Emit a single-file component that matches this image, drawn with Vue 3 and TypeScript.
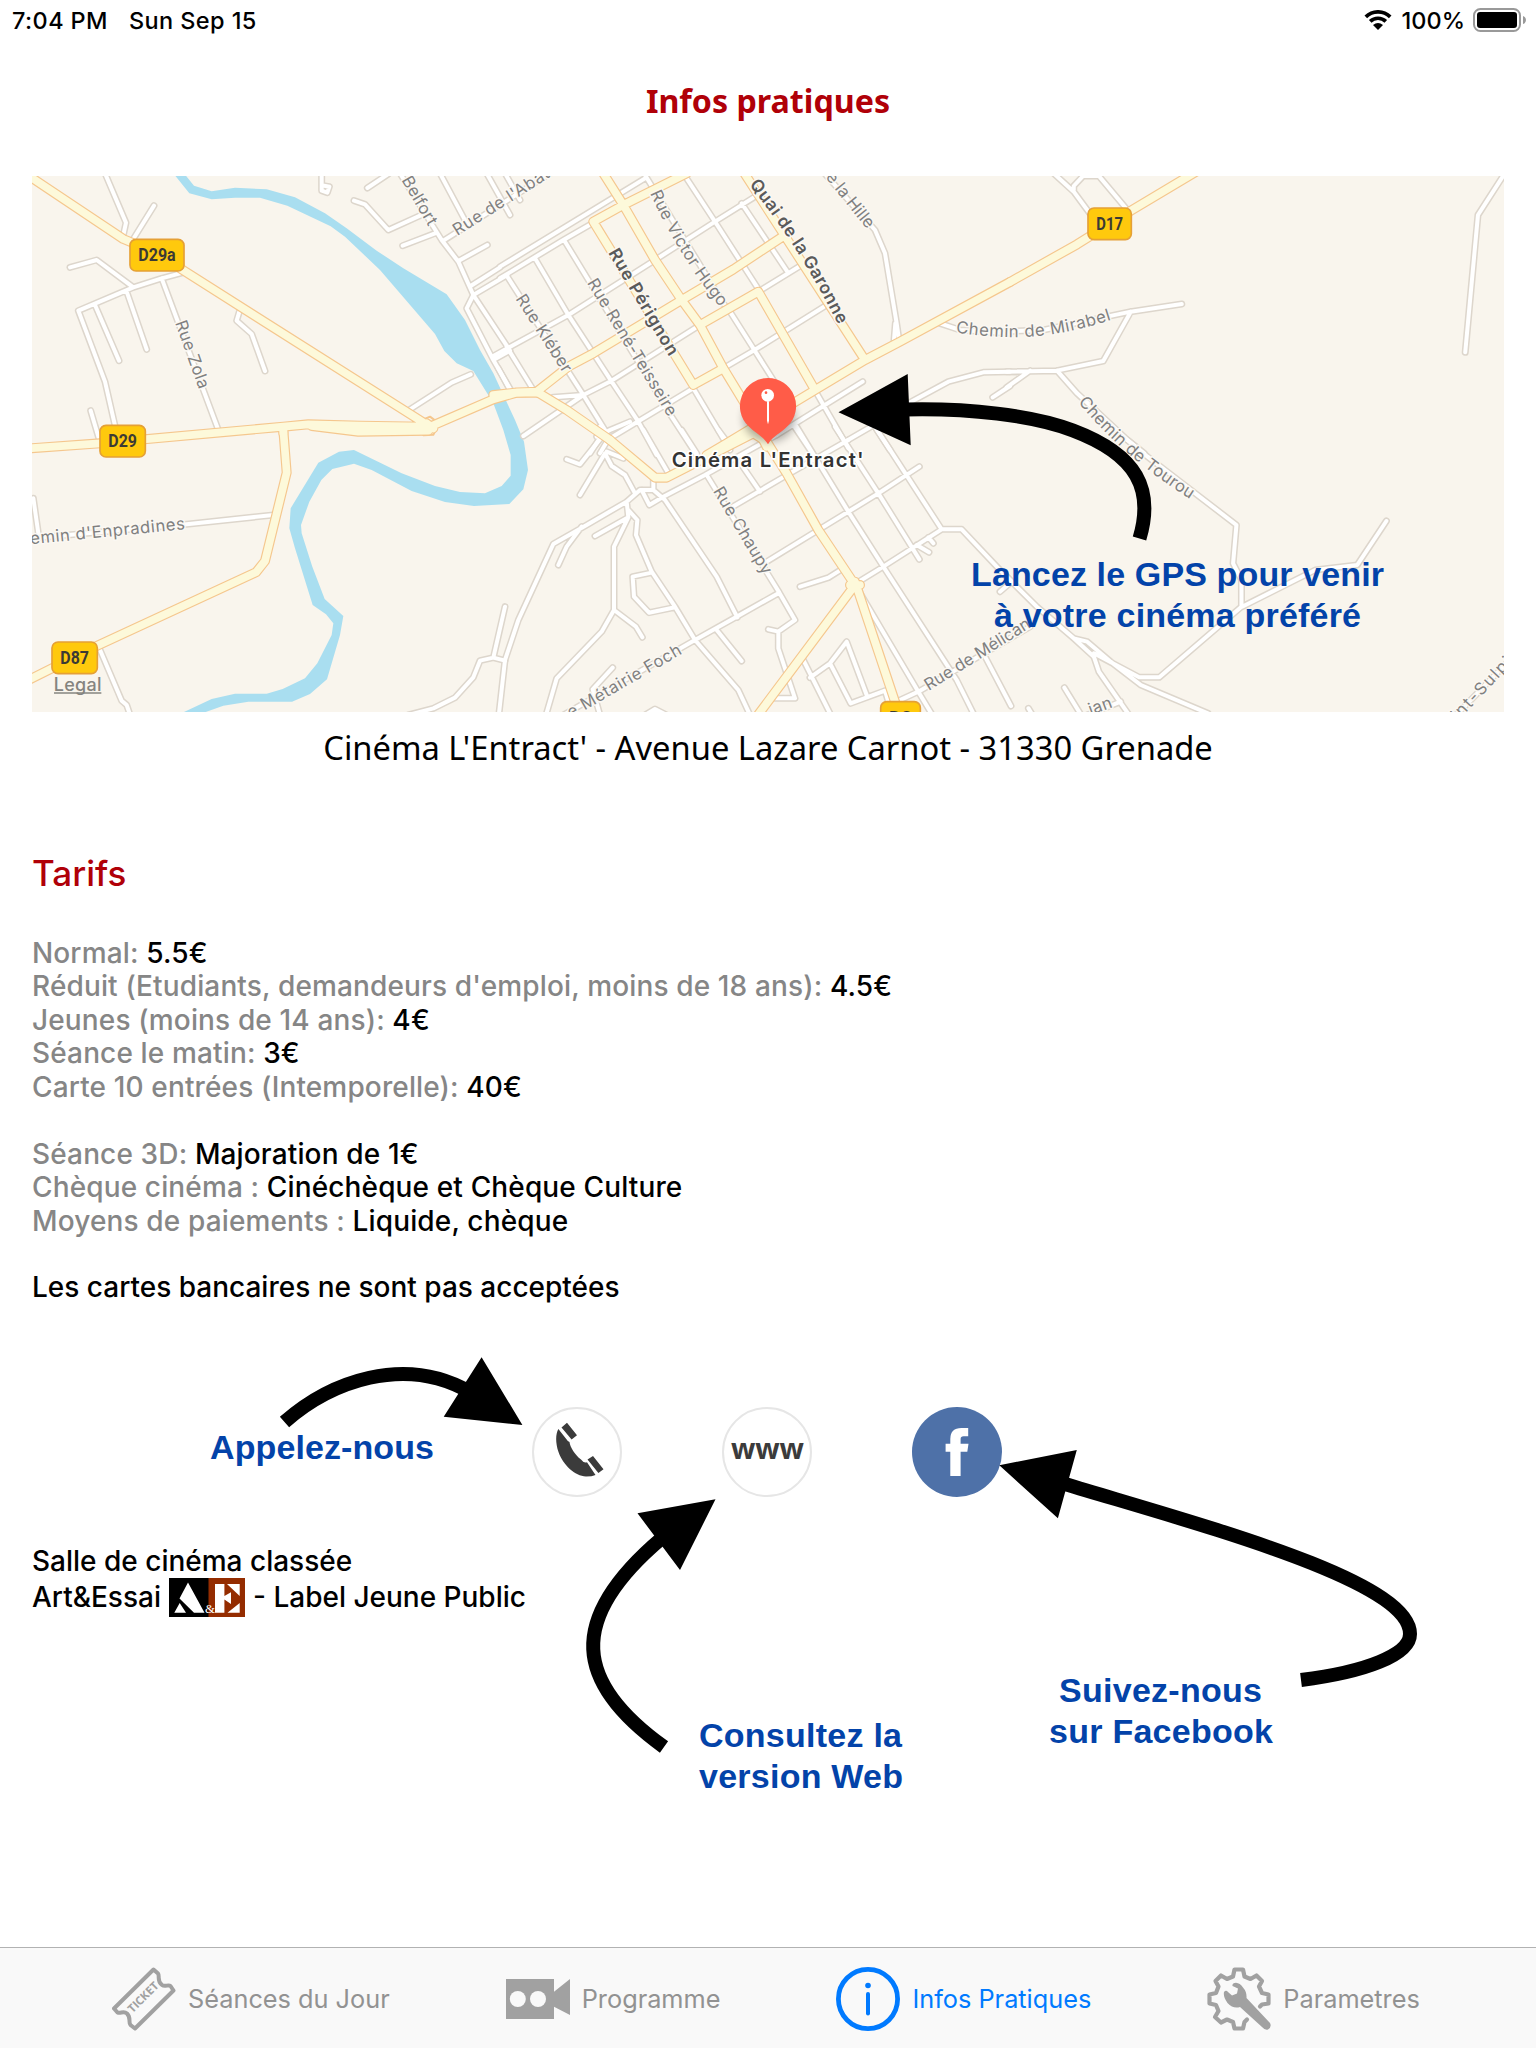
<script setup lang="ts">
interface Sheet { place: string; minor: string; major: string }
interface Label { text: string; path: string; len: number; bold?: boolean }
interface Badge { text: string; x: number; y: number; w: number }
interface Fare { label: string; value: string }

const sheets: Sheet[] = [
  {
    place: 'translate(0 0)',
    minor: 'M315 40L378 188L370 225M462 137L398 240M210 322L290 300L400 382M560 335L485 355L400 382L235 452L315 665L348 810M285 435L357 602M380 395L440 568M485 355L655 810M272 752L298 840M718 455L710 482L755 522L795 633M1230 748L1355 668L1412 643M965 40V92L982 98L988 80L965 76M1102 84L1165 42M1062 122L1095 133L1165 210L1275 160M1208 257L1305 220M1200 40L1325 240L1375 305L1420 405L1400 445L1480 600L1535 695M1320 40L1400 190M1330 242L1650 40M1375 303L1462 255M1412 378L1500 322M1420 405L1522 345M1420 405L1530 572M1480 600L1530 572M1460 40L1530 165M1515 40L1560 120',
    major: 'M90 50L370 237L430 262M540 325L1250 775L1290 800M90 865L300 850L850 800L925 793L1080 797L1275 800M935 798L1075 815L1285 812M1280 790L1300 805M1290 800L1480 718L1550 698H1610M850 800V820',
  },
  {
    place: 'translate(0 810)',
    minor: 'M100 205L115 310M90 325L560 283L820 255M298 655L365 812L380 825L392 860M1515 530L1480 683L1440 692L1420 742L1365 803L1300 835L1225 855M1480 683L1515 692',
    major: 'M850 0L860 128L795 393L768 427L290 648L90 748',
  },
  {
    place: 'translate(1500 0)',
    minor: 'M0 320L435 55M0 355L190 240L280 188M432 40L670 430L690 455L820 660L860 725M550 40L645 185L780 395M192 240L515 770L590 885M105 295L205 465L335 665L415 785L470 885M725 130L862 335M22 350L250 705L315 810L270 880M-20 588L205 465L465 300L645 185L765 110M20 560L102 693M160 712L250 705L335 662L600 495M775 395L910 312M580 685L325 838L300 880M670 625L760 572L985 432M250 705L70 828M-5 625L30 690M580 685L690 870M950 700L1045 865M1088 665L970 738L830 825M880 795L940 885M960 25L1125 210L1155 280L1190 490L1198 545M1186 490L1182 540M1320 490L1380 510L1530 520M1530 635L1450 637L1345 665L1225 730L1105 805L1035 845M1478 712L1530 678M1105 770L1170 870',
    major: 'M310 40L370 135L465 300L545 420L600 495L670 625L740 740L800 860M560 40L370 135L280 185L580 675L670 625M110 695L205 620L280 580L545 420L700 328L860 222M600 495L775 395L945 690M730 35L1095 600M-20 705L45 698L110 695L200 750L330 840M1530 366L1200 545L1095 600L945 690L680 850L620 885',
  },
  {
    place: 'translate(1500 810)',
    minor: 'M300 -10L310 15L240 103L200 88M320 65L370 85M290 20L330 0L390 -25M315 70L240 195M315 70L335 108L375 135L405 190M830 15L615 135L490 200L448 225L425 180M620 135L838 488L885 570L835 605L805 598M835 605V655L885 805H825M838 488L710 560L585 630L190 855M460 150V180H420L380 215L260 285L160 342L55 570L15 690L-3 850M460 180L495 210L650 440L712 562M380 215L385 262M285 318L385 262L342 350V540L305 605L170 745L138 855M385 240L412 270L408 315L455 425L525 530L585 630L715 780L750 855M342 540L408 590L427 622M455 428L398 440L402 500L447 548L525 532M650 600L725 693M245 290L200 350L175 405M338 713L278 778L300 855M435 855L465 837L500 855M725 105L780 185M430 0L505 130M545 0L590 70M655 0L685 40M1045 30L870 130L690 235M890 -10L1045 245L1150 410L1370 750L1425 860M1005 -10L1135 190L1258 388M1125 -10L1325 298H1385L1500 420L1535 455L1500 485M1258 110L1135 190L955 300L800 395M1325 298L1150 410L1060 465M1250 345L1287 367M1285 322L1300 340M900 470L985 443L1025 418M905 680L995 860M930 743L990 700L1040 635L1100 795M990 700L1052 820L1155 782L1165 815M1075 480L1255 785L1300 860M1190 815L1255 785L1590 590M1450 670L1533 828',
    major: 'M330 30L465 143H500L760 10L800 35L860 130L955 300L1065 465L770 860M1065 455L1190 830M1050 465H1080',
  },
  {
    place: 'translate(3030 0) scale(1.00638 1)',
    minor: 'M-30 515L100 510L360 455L512 432M360 455L278 603L140 632L-10 635M60 632L-10 682M140 632L200 700L350 840L400 880M130 40L190 95L245 170M190 90V78L218 48H265L350 150M1475 40L1395 165L1357 577',
    major: 'M560 32L360 152L200 253L0 366',
  },
  {
    place: 'translate(3030 810) scale(1.00638 1)',
    minor: 'M350 30L410 80L675 285L665 400L690 450V530L445 742H385L250 670M1122 273L1035 405L910 420L692 530M-20 430L80 530L190 625L250 680L265 725L355 855M190 625L230 635L300 695L390 765L590 850M162 773L212 855M55 835L70 860M230 855L330 815M1330 855L1490 690',
    major: '',
  },
]

const labels: Label[] = [
  { text: 'Belfort', path: 'M1204 60L1288 205', len: 162 },
  { text: "Rue de l'Abat", path: 'M1372 228L1655 48', len: 332 },
  { text: 'Rue Zola', path: 'M525 488L598 692', len: 214 },
  { text: 'Rue Kléber', path: 'M1546 416L1692 644', len: 268 },
  { text: 'Rue René-Teisseire', path: 'M1760 368L2006 774', len: 472 },
  { text: 'Rue Pérignon', path: 'M1824 278L2010 595', len: 363, bold: true },
  { text: 'Rue Victor Hugo', path: 'M1950 100Q2040 295 2164 446', len: 402 },
  { text: 'Quai de la Garonne', path: 'M2247 74Q2405 270 2520 506', len: 500, bold: true },
  { text: 'e la Hille', path: 'M2476 52L2604 212', len: 200 },
  { text: 'Chemin de Mirabel', path: 'M2867 518C2990 532 3110 552 3336 479', len: 474 },
  { text: 'Chemin de Tourou', path: 'M3234 727Q3370 892 3580 1024', len: 446 },
  { text: "emin d'Enpradines", path: 'M92 1153L557 1107', len: 466 },
  { text: 'Rue Chaupy', path: 'M2138 993L2293 1252', len: 296 },
  { text: 'e Métairie Foch', path: 'M1713 1675L2049 1480', len: 388 },
  { text: 'Rue de Mélican', path: 'M2786 1593L3098 1399', len: 364 },
  { text: 'ian', path: 'M3272 1666L3342 1640', len: 72 },
  { text: 'int-Sulpi', path: 'M4374 1684L4554 1492', len: 240 },
]

const badges: Badge[] = [
  { text: 'D29a', x: 390, y: 238, w: 162 },
  { text: 'D29', x: 300, y: 796, w: 136 },
  { text: 'D87', x: 156, y: 1446, w: 136 },
  { text: 'D17', x: 3264, y: 144, w: 130 },
  { text: 'D2', x: 2642, y: 1625, w: 119 },
]

const fares: Fare[] = [
  { label: 'Normal:', value: '5.5€' },
  { label: "Réduit (Etudiants, demandeurs d'emploi, moins de 18 ans):", value: '4.5€' },
  { label: 'Jeunes (moins de 14 ans):', value: '4€' },
  { label: 'Séance le matin:', value: '3€' },
  { label: 'Carte 10 entrées (Intemporelle):', value: '40€' },
]
const extras: Fare[] = [
  { label: 'Séance 3D:', value: 'Majoration de 1€' },
  { label: 'Chèque cinéma :', value: 'Cinéchèque et Chèque Culture' },
  { label: 'Moyens de paiements :', value: 'Liquide, chèque' },
]

const notes = [
  { text: 'Lancez le GPS pour venir', x: 971, y: 586, w: 413 },
  { text: 'à votre cinéma préféré', x: 994, y: 627, w: 367 },
  { text: 'Appelez-nous', x: 210, y: 1459, w: 224 },
  { text: 'Consultez la', x: 699, y: 1747, w: 203 },
  { text: 'version Web', x: 699, y: 1788, w: 204 },
  { text: 'Suivez-nous', x: 1059, y: 1701.5, w: 203 },
  { text: 'sur Facebook', x: 1049, y: 1742.5, w: 224 },
]
</script>

<template>
  <div class="screen">
    <header class="status">
      <span class="time">7:04 PM</span>
      <span class="date">Sun Sep 15</span>
      <span class="fill"></span>
      <svg class="wifi" width="28" height="20" viewBox="0 0 28 20">
        <path d="M1.8 6.8A17.5 17.5 0 0 1 26.2 6.8M6.2 11.4A11.2 11.2 0 0 1 21.8 11.4" fill="none" stroke="#000" stroke-width="3.7" />
        <path d="M14 20L9 15Q14 11 19 15Z" />
      </svg>
      <span class="percent">100%</span>
      <svg class="battery" width="53" height="24" viewBox="0 0 53 24">
        <rect x="1" y="1" width="46" height="22" rx="6.5" fill="none" stroke="#999" stroke-width="2" />
        <rect x="4" y="4" width="40" height="16" rx="3" />
        <path d="M50 8Q53 9 53 12T50 16Z" fill="#999" />
      </svg>
    </header>

    <h1 class="title">Infos pratiques</h1>

    <svg class="map" viewBox="96 48 4416 1608">
      <defs>
        <path v-for="(l, i) in labels" :id="'street' + i" :key="i" :d="l.path" />
        <filter id="soft" x="-50%" y="-50%" width="200%" height="200%"><feGaussianBlur stdDeviation="12" /></filter>
      </defs>
      <rect x="96" y="48" width="4416" height="1608" fill="#f9f5ed" />
      <path
        class="river"
        d="M520 40L568 100L635 118L705 113H780L862 137L992 199L1035 230L1140 330L1305 522L1333 573L1370 610L1420 633L1480 730L1510 810L1532 885V947L1505 978L1455 1000L1380 996L1305 978L1205 940L1062 870L1017 875L955 908L872 1045L868 1105L885 1165L938 1335L978 1363L1000 1390L995 1425L952 1510L915 1555L848 1587L800 1601H705L635 1617L535 1664H595L670 1637L745 1625H876L930 1602L981 1558L1020 1425L1030 1368L974 1317L937 1220L905 1120L903 1095L928 1025L964 960L997 927L1062 911L1115 930L1235 993L1335 1026L1422 1038L1528 1032L1570 988L1584 930L1572 845L1545 780L1480 640L1440 570L1395 480L1340 403L1210 325L1130 272L1040 205L975 160L885 112L800 88L705 83L635 94L582 77L552 40Z"
      />
      <g class="roads">
        <g v-for="s in sheets" :key="'a' + s.place" :transform="s.place"><path :d="s.minor" class="minor-edge" /></g>
        <g v-for="s in sheets" :key="'b' + s.place" :transform="s.place"><path :d="s.minor" class="minor" /></g>
        <g v-for="s in sheets" :key="'c' + s.place" :transform="s.place"><path :d="s.major" class="major-edge" /></g>
        <path d="M1262 782L1290 770L1310 785V805L1300 824L1270 826Z M2548 1262L2588 1268L2584 1290L2545 1280Z" class="major-edge" style="stroke-width: 6" />
        <g v-for="s in sheets" :key="'d' + s.place" :transform="s.place"><path :d="s.major" class="major" /></g>
      </g>
      <text v-for="(l, i) in labels" :key="'t' + i" class="street" :class="{ bold: l.bold }" :textLength="l.len">
        <textPath :href="'#street' + i" :textLength="l.len">{{ l.text }}</textPath>
      </text>
      <g v-for="b in badges" :key="b.text">
        <rect :x="b.x" :y="b.y" :width="b.w" height="95" rx="18" fill="#ffc90d" stroke="#e5a036" stroke-width="5" />
        <text class="badge" :x="b.x + 25" :y="b.y + 66" :textLength="b.w - 50" lengthAdjust="spacingAndGlyphs">{{ b.text }}</text>
      </g>
      <text class="legal" x="161" y="1593" textLength="144">Legal</text>
      <path d="M162 1599H304" stroke="#85847f" stroke-width="4" />
      <ellipse cx="2308" cy="775" rx="78" ry="70" fill="#000" opacity=".3" filter="url(#soft)" />
      <path d="M2304 654A84 84 0 0 1 2363 798C2340 822 2320 826 2304 853C2288 826 2268 822 2245 798A84 84 0 0 1 2304 654Z" fill="#ff5c48" />
      <circle cx="2303" cy="706" r="19" fill="#fff" />
      <circle cx="2298" cy="698" r="4" fill="#ff5c48" />
      <path d="M2301 724H2307V782L2304 793L2301 782Z" fill="#fff" />
      <text class="place" x="2015" y="921" textLength="576">Cinéma L'Entract'</text>
    </svg>

    <p class="address">Cinéma L'Entract' - Avenue Lazare Carnot - 31330 Grenade</p>

    <main class="info">
      <h2>Tarifs</h2>
      <div class="fares">
        <p v-for="f in fares" :key="f.label"><span>{{ f.label }}</span> {{ f.value }}</p>
      </div>
      <div class="fares">
        <p v-for="f in extras" :key="f.label"><span>{{ f.label }}</span> {{ f.value }}</p>
      </div>
      <p class="cards">Les cartes bancaires ne sont pas acceptées</p>

      <div class="links">
        <svg width="90" height="90" viewBox="0 0 90 90">
          <circle cx="45" cy="45" r="44" fill="#fff" stroke="#e6e6e6" stroke-width="2" />
          <g fill="#3b3b3b">
            <path d="M26.4 22C23.5 27 23.4 36 26.5 45C31 58 43 69 54 69.5Q60 69.5 63.5 68L55 55.2Q52 56.5 49 52.5C43 48 38 40 37.5 35L35.8 34Z" />
            <path d="M29.5 20.5L35 15.7L45 28.3L39.6 32.5ZM55.5 52.5L61 49L71.5 62.3L66.4 66Z" />
          </g>
        </svg>
        <svg width="90" height="90" viewBox="0 0 90 90">
          <circle cx="45" cy="45" r="44" fill="#fff" stroke="#e6e6e6" stroke-width="2" />
          <text class="www" x="9" y="52.3" textLength="73">www</text>
        </svg>
        <svg width="90" height="90" viewBox="0 0 90 90">
          <circle cx="45" cy="45" r="45" fill="#4e71a8" />
          <path d="M38.3 69H48.6V44.7H55.3L56.5 36.7H48.6V32Q48.6 29.3 51.5 29.3H56.2V21H49.5Q38.3 21 38.3 32V36.7H33.6V44.7H38.3Z" fill="#fff" />
        </svg>
      </div>

      <div class="room">
        <p>Salle de cinéma classée</p>
        <p class="row">
          <span>Art&amp;Essai</span>
          <svg width="76" height="39" viewBox="0 0 76 39">
            <rect width="40" height="39" />
            <rect x="39.5" width="36.5" height="39" fill="#942c00" />
            <g fill="#fff">
              <path d="M19 4.5L35.500 34.7H25L10.5 20.5ZM10.7 25L17 34.7H5.3Z" />
              <path d="M46 6H55.4V18L62 14.3V26L55.4 21.5V34.7H46ZM58 6H70.7V18ZM70.7 25V34.7H58.5Z" />
              <text x="36" y="34.5" font-size="13" font-family="Liberation Serif, serif">&amp;</text>
            </g>
          </svg>
          <span>- Label Jeune Public</span>
        </p>
      </div>
    </main>

    <nav class="tabs">
      <a class="tab">
        <svg width="64" height="64" viewBox="0 0 64 64">
          <path d="M41.5 2.5L46 6.5C48 9 44.5 14 50 18C53 20.5 56 17 58.5 19L61.5 23.5L23 61.5L18.5 58C16 55 19.5 51 15 46.5C11.5 43.5 8.5 47 5.5 45.5L2 41.5Z" fill="none" stroke="#a1a1a1" stroke-width="4" stroke-linejoin="round" />
          <text transform="translate(20.5 46.5) rotate(-45)" font-size="11.5" font-weight="700" fill="#a1a1a1" textLength="38" font-family="Open Sans, sans-serif">TICKET</text>
        </svg>
        <span>Séances du Jour</span>
      </a>
      <a class="tab">
        <svg width="64" height="64" viewBox="0 0 64 64">
          <path d="M0 12H48V24.7L64 12V48L48 39.7V52H0Z" fill="#a1a1a1" />
          <circle cx="11.8" cy="32" r="8" fill="#f9f9f9" />
          <circle cx="32" cy="32" r="8" fill="#f9f9f9" />
        </svg>
        <span>Programme</span>
      </a>
      <a class="tab active">
        <svg width="64" height="64" viewBox="0 0 64 64">
          <circle cx="32" cy="32" r="29.6" fill="none" stroke="#007aff" stroke-width="4.8" />
          <circle cx="32" cy="18.5" r="2.8" fill="#007aff" />
          <path d="M32 27V46.500" stroke="#007aff" stroke-width="4" stroke-linecap="round" />
        </svg>
        <span>Infos Pratiques</span>
      </a>
      <a class="tab">
        <svg width="64" height="64" viewBox="0 0 64 64">
          <path d="M53 39.5L55 37.5L61.5 36.5V27.5L55 26L52 19.5L55 14L49.5 8.5L43.5 12L37.5 9.5L36 2.5H27.5L26 9.5L20 12L14 8.5L8.5 14L11.5 19.5L9 26L2.5 27.5V36.5L9 38L11.5 44L8 50L14 55.5L20 52.5L26 55L27.5 61.5H36L37.5 55L40 52.5" fill="none" stroke="#a1a1a1" stroke-width="4.2" stroke-linejoin="round" stroke-linecap="round" />
          <path d="M17 25Q19 22.5 21 25L25 28.5L30 26.5L31 21.5L25.5 19Q25 16 29 15.7Q33 16 36 20.5Q40 25 39.5 31L63 56Q65 60 61 62.5Q58 63.5 55 60L33 40Q26 42 20.5 36Q16 30 17 25Z" fill="#a1a1a1" />
        </svg>
        <span>Parametres</span>
      </a>
    </nav>

    <svg class="notes" width="1536" height="2048" viewBox="0 0 1536 2048">
      <g fill="none" stroke="#000" stroke-width="14">
        <path d="M905 409.5C967 408 1033 415 1073 430.5C1138 455 1154 490 1139.500 538.5" />
        <path d="M284.5 1422C330 1382 404 1354 470 1392" />
        <path d="M664 1747C575 1683 565 1620 662 1538" />
        <path d="M1301 1680C1365 1672 1410 1655 1410 1634C1410 1580 1200 1525 1065 1484" />
      </g>
      <path d="M838.5 412.3L907.7 374L910.7 445.3ZM481.6 1357.3L522.4 1425L443.7 1416.7ZM715.5 1499.3L637.5 1513.3L680 1570ZM999.3 1465.3L1076.8 1450L1057.9 1518.3Z" />
      <text v-for="n in notes" :key="n.text" :x="n.x" :y="n.y" :textLength="n.w">{{ n.text }}</text>
    </svg>
  </div>
</template>

<style>
body { margin: 0; background: #fff; }
</style>

<style scoped>
.screen { position: relative; display: flex; flex-direction: column; width: 1536px; height: 2048px; overflow: hidden; background: #fff; color: #000; font-family: Inter, "Liberation Sans", sans-serif; }
p, h1, h2 { margin: 0; }
.status { display: flex; align-items: center; height: 40px; padding: 0 10px 0 12px; font-size: 23.5px; font-weight: 500; }
.time, .date { letter-spacing: .4px; }
.date { margin-left: 21px; }
.fill { flex: 1; }
.percent { margin: 0 8px 0 10px; }
.title { margin-top: 36px; text-align: center; color: #b00008; font: 700 32.2px/50px "Noto Sans", sans-serif; }
.map { display: block; width: 1472px; height: 536px; margin: 50px 32px 0; }
.river { fill: #a9def0; }
.roads path { fill: none; stroke-linejoin: round; stroke-linecap: round; }
.roads .minor-edge { stroke: #ddd6cc; stroke-width: 21; }
.roads .minor { stroke: #fff; stroke-width: 12; }
.roads .major-edge { stroke: #f5c78e; stroke-width: 30; }
.roads .major { stroke: #fdf9da; stroke-width: 23; }
.street { font-size: 50px; font-weight: 400; fill: #808080; stroke: #fbf8f3; stroke-width: 9; stroke-linejoin: round; paint-order: stroke; }
.street.bold { font-size: 52px; font-weight: 600; fill: #5a5a5a; }
.badge { font: 700 56px Roboto, sans-serif; fill: #3b3a35; }
.legal { font-size: 54px; font-weight: 500; fill: #85847f; }
.place { font-size: 61px; font-weight: 600; fill: #333; stroke: #fff; stroke-width: 10; stroke-linejoin: round; paint-order: stroke; }
.address { margin-top: 12px; height: 48px; text-align: center; font: 400 32.7px/48px "Noto Sans", sans-serif; }
.info { flex: 1; padding: 0 32px; font-size: 28px; font-weight: 500; line-height: 33.45px; }
h2 { margin: 79px 0 42px; font-size: 35px; line-height: 44px; font-weight: 500; color: #b00008; }
.fares { margin-bottom: 33.4px; letter-spacing: .14px; }
.fares span { color: #868686; }
.links { display: flex; justify-content: center; gap: 100px; margin: 102px 2px 0 0; }
.links svg { display: block; }
.www { font: 700 28.5px "Open Sans", sans-serif; fill: #3b3b3b; }
.room { margin-top: 48px; }
.row { display: flex; align-items: center; gap: 8px; line-height: 39px; }
.tabs { display: flex; gap: 116px; box-sizing: border-box; height: 101px; padding: 19px 0 0 112px; border-top: 1px solid #b2b2b2; background: #f9f9f9; }
.tab { display: flex; align-items: center; gap: 12px; height: 64px; color: #929292; font-size: 25.3px; white-space: nowrap; }
.tab span { margin-top: -2px; }
.active { color: #007aff; }
.notes { position: absolute; left: 0; top: 0; pointer-events: none; }
.notes text { font: 700 34px "Liberation Sans", sans-serif; fill: #0343a9; }
</style>
